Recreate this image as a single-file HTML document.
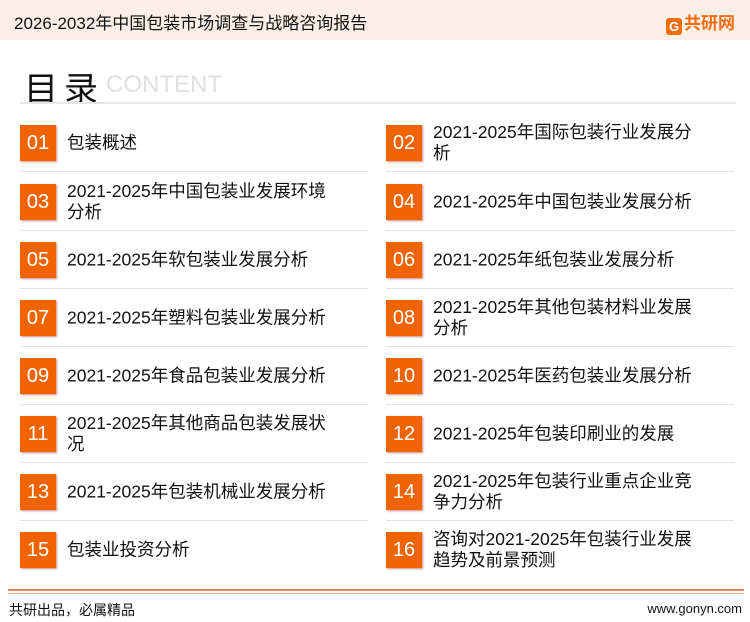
<html><head><style>
body{margin:0;width:750px;height:622px;background:#fff;font-family:"Liberation Sans","Noto Sans CJK SC",sans-serif;position:relative;overflow:hidden}
.hd{position:absolute;left:0;top:0;width:750px;height:40px;background:#fcefe8}
.ht{position:absolute;left:14px;top:9px;font-size:17px;color:#111}
.logo{position:absolute;left:666px;top:9px;font-size:17px;font-weight:bold;color:#f26b0f}
.lg{display:inline-block;width:16px;height:17px;background:#f26b0f;border-radius:3px;vertical-align:-2px;margin-right:2px;color:#fff;font-size:13px;text-align:center;line-height:17px}
.mt{position:absolute;left:24px;top:62px;font-size:34px;color:#111;letter-spacing:6px}
.ct{position:absolute;left:106px;top:71px;font-size:24px;color:#e0e0e0}
.ln{position:absolute;left:20px;top:102px;width:716px;height:2px;background:#e6e6e6}
.it{position:absolute;width:350px;height:46px}
.b{position:absolute;left:0;top:0;width:36px;height:36px;background:#f06400;color:#fff;font-size:20px;line-height:36px;text-align:center;box-shadow:1px 1px 2px #c88}
.t{position:absolute;left:47px;top:50%;transform:translateY(-50%);margin-top:-5px;width:275px;font-size:17.5px;line-height:21px;color:#111}
.s{position:absolute;left:0;top:46px;width:348px;height:1px;background:#e2e2e2}
.f1{position:absolute;left:8px;top:589px;width:736px;height:2px;background:#d9895a}
.f2{position:absolute;left:8px;top:593px;width:736px;height:1px;background:#e8b090}
.fl{position:absolute;left:9px;top:600px;font-size:14px;color:#111}
.fr{position:absolute;right:8px;top:601px;font-size:13px;color:#111}
</style></head><body>
<div class="hd"></div>
<div class="ht">2026-2032年中国包装市场调查与战略咨询报告</div>
<div class="logo"><span class="lg">G</span>共研网</div>
<div class="mt">目录</div><div class="ct">CONTENT</div>
<div class="ln"></div>

<div class="it" style="left:20px;top:125px"><div class="b">01</div><div class="t">包装概述</div><div class="s"></div></div>
<div class="it" style="left:386px;top:125px"><div class="b">02</div><div class="t">2021-2025年国际包装行业发展分析</div><div class="s"></div></div>
<div class="it" style="left:20px;top:184px"><div class="b">03</div><div class="t">2021-2025年中国包装业发展环境分析</div><div class="s"></div></div>
<div class="it" style="left:386px;top:184px"><div class="b">04</div><div class="t">2021-2025年中国包装业发展分析</div><div class="s"></div></div>
<div class="it" style="left:20px;top:242px"><div class="b">05</div><div class="t">2021-2025年软包装业发展分析</div><div class="s"></div></div>
<div class="it" style="left:386px;top:242px"><div class="b">06</div><div class="t">2021-2025年纸包装业发展分析</div><div class="s"></div></div>
<div class="it" style="left:20px;top:300px"><div class="b">07</div><div class="t">2021-2025年塑料包装业发展分析</div><div class="s"></div></div>
<div class="it" style="left:386px;top:300px"><div class="b">08</div><div class="t">2021-2025年其他包装材料业发展分析</div><div class="s"></div></div>
<div class="it" style="left:20px;top:358px"><div class="b">09</div><div class="t">2021-2025年食品包装业发展分析</div><div class="s"></div></div>
<div class="it" style="left:386px;top:358px"><div class="b">10</div><div class="t">2021-2025年医药包装业发展分析</div><div class="s"></div></div>
<div class="it" style="left:20px;top:416px"><div class="b">11</div><div class="t">2021-2025年其他商品包装发展状况</div><div class="s"></div></div>
<div class="it" style="left:386px;top:416px"><div class="b">12</div><div class="t">2021-2025年包装印刷业的发展</div><div class="s"></div></div>
<div class="it" style="left:20px;top:474px"><div class="b">13</div><div class="t">2021-2025年包装机械业发展分析</div><div class="s"></div></div>
<div class="it" style="left:386px;top:474px"><div class="b">14</div><div class="t">2021-2025年包装行业重点企业竞争力分析</div><div class="s"></div></div>
<div class="it" style="left:20px;top:532px"><div class="b">15</div><div class="t">包装业投资分析</div></div>
<div class="it" style="left:386px;top:532px"><div class="b">16</div><div class="t">咨询对2021-2025年包装行业发展趋势及前景预测</div></div>

<div class="f1"></div><div class="f2"></div>
<div class="fl">共研出品，必属精品</div>
<div class="fr">www.gonyn.com</div>
</body></html>
